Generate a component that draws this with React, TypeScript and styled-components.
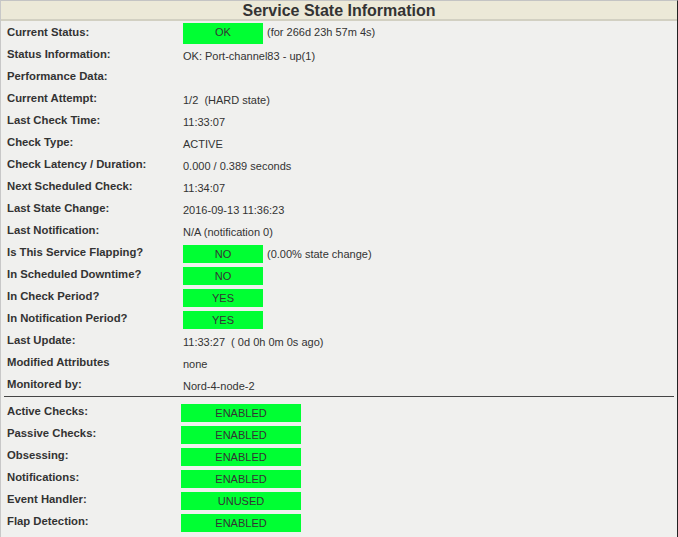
import React from "react";
import styled, { createGlobalStyle } from "styled-components";

const GlobalStyle = createGlobalStyle`
  html, body {
    margin: 0;
    padding: 0;
    background: #f0f0ee;
  }
  body {
    font-family: "Liberation Sans", Arial, sans-serif;
    color: #333;
  }
`;

const Panel = styled.div`
  box-sizing: border-box;
  width: 678px;
  min-height: 537px;
  background: #f0f0ee;
  border-top: 1px solid #c4c4c4;
  border-left: 1px solid #c8c8c8;
  border-right: 1px solid #222;
`;

const Header = styled.div`
  height: 17px;
  padding-top: 1px;
  line-height: 18px;
  background: #ece9d8;
  border-bottom: 2px solid #d2d0c2;
  text-align: center;
  font-weight: bold;
  font-size: 16px;
  color: #333;
`;

const Section = styled.div<{ $top: number }>`
  padding-top: ${(p) => p.$top}px;
`;

const Row = styled.div<{ $labelWidth: number }>`
  display: grid;
  grid-template-columns: ${(p) => p.$labelWidth}px 1fr;
  height: 22px;
`;

const Label = styled.div`
  padding: 3px 0 0 6px;
  font-weight: bold;
  font-size: 11.3px;
  line-height: 14px;
  color: #333;
  white-space: nowrap;
`;

const Value = styled.div`
  padding-top: 5px;
  font-size: 11px;
  line-height: 14px;
  color: #333;
  white-space: pre;
`;

const BoxCell = styled.div<{ $top: number }>`
  display: flex;
  align-items: flex-start;
  padding-top: ${(p) => p.$top}px;
`;

const StateBox = styled.div<{ $width: number; $height: number }>`
  box-sizing: border-box;
  width: ${(p) => p.$width}px;
  height: ${(p) => p.$height}px;
  background: #00ff33;
  text-align: center;
  font-size: 11px;
  line-height: 18px;
  color: #333;
`;

const Aside = styled.span<{ $top: number }>`
  margin-left: 4px;
  padding-top: ${(p) => p.$top}px;
  font-size: 11px;
  line-height: 14px;
  color: #333;
  white-space: pre;
`;

const Separator = styled.div`
  margin: 0 3px 4px 3px;
  border-top: 1px solid #454545;
`;

type Item =
  | { label: string; text: string }
  | { label: string; box: string; aside?: string; tall?: boolean };

const details: Item[] = [
  { label: "Current Status:", box: "OK", aside: "(for 266d 23h 57m 4s)", tall: true },
  { label: "Status Information:", text: "OK: Port-channel83 - up(1)" },
  { label: "Performance Data:", text: "" },
  { label: "Current Attempt:", text: "1/2  (HARD state)" },
  { label: "Last Check Time:", text: "11:33:07" },
  { label: "Check Type:", text: "ACTIVE" },
  { label: "Check Latency / Duration:", text: "0.000 / 0.389 seconds" },
  { label: "Next Scheduled Check:", text: "11:34:07" },
  { label: "Last State Change:", text: "2016-09-13 11:36:23" },
  { label: "Last Notification:", text: "N/A (notification 0)" },
  { label: "Is This Service Flapping?", box: "NO", aside: "(0.00% state change)" },
  { label: "In Scheduled Downtime?", box: "NO" },
  { label: "In Check Period?", box: "YES" },
  { label: "In Notification Period?", box: "YES" },
  { label: "Last Update:", text: "11:33:27  ( 0d 0h 0m 0s ago)" },
  { label: "Modified Attributes", text: "none" },
  { label: "Monitored by:", text: "Nord-4-node-2" },
];

const checks: { label: string; state: string }[] = [
  { label: "Active Checks:", state: "ENABLED" },
  { label: "Passive Checks:", state: "ENABLED" },
  { label: "Obsessing:", state: "ENABLED" },
  { label: "Notifications:", state: "ENABLED" },
  { label: "Event Handler:", state: "UNUSED" },
  { label: "Flap Detection:", state: "ENABLED" },
];

export default function App() {
  return (
    <>
      <GlobalStyle />
      <Panel>
        <Header>Service State Information</Header>
        <Section $top={1}>
          {details.map((item) =>
            "box" in item ? (
              <Row key={item.label} $labelWidth={182}>
                <Label>{item.label}</Label>
                <BoxCell $top={item.tall ? 1 : 3}>
                  <StateBox $width={80} $height={item.tall ? 21 : 18}>
                    {item.box}
                  </StateBox>
                  {item.aside && <Aside $top={2}>{item.aside}</Aside>}
                </BoxCell>
              </Row>
            ) : (
              <Row key={item.label} $labelWidth={182}>
                <Label>{item.label}</Label>
                <Value>{item.text}</Value>
              </Row>
            )
          )}
        </Section>
        <Separator />
        <Section $top={0}>
          {checks.map((c) => (
            <Row key={c.label} $labelWidth={180}>
              <Label>{c.label}</Label>
              <BoxCell $top={3}>
                <StateBox $width={120} $height={18}>
                  {c.state}
                </StateBox>
              </BoxCell>
            </Row>
          ))}
        </Section>
      </Panel>
    </>
  );
}
